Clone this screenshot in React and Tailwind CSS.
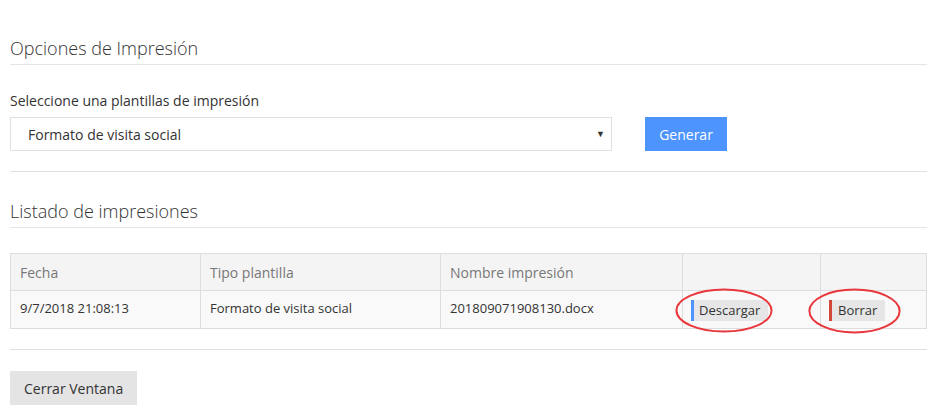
import React from 'react';

const font = { fontFamily: '"Open Sans", "Liberation Sans", sans-serif' };

function Ellipse({ className }) {
  return (
    <svg className={className} viewBox="0 0 100 46" preserveAspectRatio="none" fill="none">
      <ellipse cx="50" cy="23" rx="48.5" ry="21.5" stroke="#e8383d" strokeWidth="2" vectorEffect="non-scaling-stroke" />
    </svg>
  );
}

export default function App() {
  const rows = [
    { fecha: '9/7/2018 21:08:13', tipo: 'Formato de visita social', nombre: '201809071908130.docx' },
  ];

  return (
    <div className="w-[938px] h-[413px] bg-white text-[#333] overflow-hidden" style={font}>
      <div className="pl-[10px] pr-[11px]">
        {/* Opciones de impresión */}
        <h3 className="pt-[36px] pb-[4px] text-[18px] leading-[24px] font-light border-b border-[#e5e5e5]">
          Opciones de Impresión
        </h3>

        <label className="block mt-[27px] text-[14px] leading-[18px]">Seleccione una plantillas de impresión</label>
        <div className="flex items-center mt-[7px]">
          <div className="w-[602px] h-[34px] border border-[#e0e0e0] flex items-center justify-between pl-[17px] pr-[6px] text-[14px]">
            <span>Formato de visita social</span>
            <span className="text-[9px] text-[#333]">▼</span>
          </div>
          <button className="ml-[33px] h-[34px] w-[82px] bg-[#4d94ff] text-white text-[14px]">Generar</button>
        </div>

        <div className="mt-[20px] border-b border-[#e0e0e0]" />

        {/* Listado */}
        <h3 className="pt-[27px] pb-[4px] text-[18px] leading-[24px] font-light border-b border-[#e5e5e5]">
          Listado de impresiones
        </h3>

        <table className="mt-[25px] w-[917px] border-collapse text-[13px] table-fixed">
          <thead>
            <tr className="bg-[#f4f4f4] text-[#777] h-[37px]">
              <th className="w-[190px] border border-[#ddd] text-left font-normal pl-[9px] text-[14px]">Fecha</th>
              <th className="w-[240px] border border-[#ddd] text-left font-normal pl-[9px] text-[14px]">Tipo plantilla</th>
              <th className="w-[242px] border border-[#ddd] text-left font-normal pl-[9px] text-[14px]">Nombre impresión</th>
              <th className="w-[138px] border border-[#ddd]" />
              <th className="border border-[#ddd]" />
            </tr>
          </thead>
          <tbody>
            {rows.map((r) => (
              <tr key={r.nombre} className="h-[38px] bg-[#f9f9f9]">
                <td className="border border-[#ddd] pl-[9px] pb-[2px]">{r.fecha}</td>
                <td className="border border-[#ddd] pl-[9px] pb-[2px]">{r.tipo}</td>
                <td className="border border-[#ddd] pl-[9px] pb-[2px]">{r.nombre}</td>
                <td className="border border-[#ddd] pl-[8px] pt-[2px]">
                  <span className="relative inline-block">
                    <span className="block h-[21px] leading-[21px] pl-[5px] pr-[8px] bg-[#e6e6e6] border-l-[3px] border-[#4d94ff]">Descargar</span>
                    <Ellipse className="absolute left-[-16px] top-[-12px] w-[98px] h-[45px] pointer-events-none" />
                  </span>
                </td>
                <td className="border border-[#ddd] pl-[8px] pt-[2px]">
                  <span className="relative inline-block">
                    <span className="block h-[21px] leading-[21px] pl-[6px] pr-[8px] bg-[#e6e6e6] border-l-[3px] border-[#d2473a]">Borrar</span>
                    <Ellipse className="absolute left-[-21px] top-[-12px] w-[93px] h-[46px] pointer-events-none" />
                  </span>
                </td>
              </tr>
            ))}
          </tbody>
        </table>

        <div className="mt-[20px] border-b border-[#e0e0e0]" />

        <button className="mt-[21px] h-[34px] px-[14px] bg-[#e4e4e4] text-[14px] text-[#333]">Cerrar Ventana</button>
      </div>
    </div>
  );
}
